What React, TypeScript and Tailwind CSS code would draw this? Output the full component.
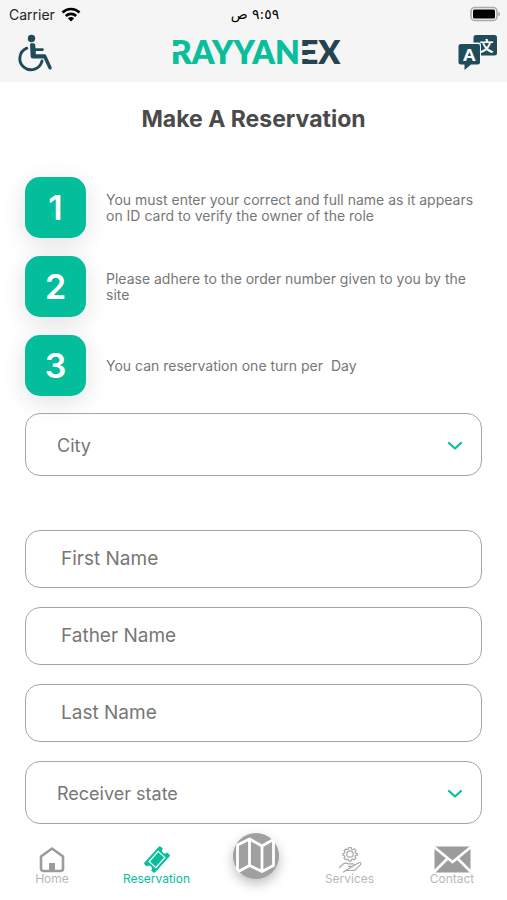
import * as React from "react"

const steps = [
  "You must enter your correct and full name as it appears on ID card to verify the owner of the role",
  "Please adhere to the order number given to you by the site",
  "You can reservation one turn per \u00a0Day",
]

function StatusBar() {
  return (
    <div className="grid h-7 grid-cols-3 items-center pr-1.5 pl-[9px] text-[#222]">
      <div className="flex items-center gap-1.5">
        <span className="text-[14px]">Carrier</span>
        <svg viewBox="0 0 20 15" className="h-[15px] w-5" aria-label="Wi-Fi">
          <g fill="none" stroke="#000" strokeWidth="2.6">
            <path d="M1.5 5.5C6.2.9 13.8.9 18.5 5.5" />
            <path d="M4.8 9C7.7 6.2 12.3 6.2 15.2 9" />
          </g>
          <path d="M10 14.5 6.8 11.2C8.6 9.6 11.4 9.6 13.2 11.2Z" />
        </svg>
      </div>
      <span
        dir="rtl"
        className="text-center font-['DejaVu_Sans',sans-serif] text-[14px] text-black"
      >
        ٩:٥٩ ص
      </span>
      <svg
        viewBox="0 0 31 16"
        className="h-4 w-[31px] justify-self-end"
        aria-label="Battery full"
      >
        <rect x="1" y="1.5" width="26" height="13" rx="4" fill="#f5f5f5" stroke="#aaa" strokeWidth="1.6" />
        <rect x="3" y="3.5" width="22" height="9" rx="1.5" />
        <path d="M28.5 5.5C30.5 6.5 30.5 9.5 28.5 10.5Z" fill="#999" />
      </svg>
    </div>
  )
}

function WheelchairIcon() {
  return (
    <svg viewBox="0 0 36 38" className="h-[38px] w-9" aria-hidden>
      <circle cx="14.5" cy="4.5" r="3.7" fill="#1f4c58" />
      <path
        d="M13 10.2C13 8.8 18 8.8 18.2 10.6L18.5 14.3H25.5C27.3 14.3 27.3 17 25.500 17H18.7L18.9 20.3H27.2C28.3 20.3 28.9 20.7 29.3 21.6L34.6 33.2C35.4 35.3 32.4 36.5 31.5 34.6L26.8 24.5H15.8C14.5 24.5 13.8 23.6 13.7 22.5Z"
        fill="#1f4c58"
      />
      <path
        d="M9.8 14.2A11.2 11.2 0 1 0 25 27"
        fill="none"
        stroke="#1f4c58"
        strokeWidth="2.9"
        strokeLinecap="round"
      />
    </svg>
  )
}

function TranslateIcon() {
  return (
    <svg viewBox="0 0 40 38" className="h-[38px] w-10" aria-hidden>
      <path
        d="M18 1H36.5Q39 1 39 3.5V19Q39 21.5 36.5 21.5H23V11Q23 8.5 20.5 8.5H15.5V3.5Q15.5 1 18 1Z"
        fill="#1f4c58"
      />
      <path
        d="M3 10H20Q22 10 22 12V28Q22 30.5 19.500 30.5H13L6.5 36V30.5H3Q.5 30.5 .5 28V12.5Q.5 10 3 10Z"
        fill="#1f4c58"
      />
      <text x="11.2" y="26.5" textAnchor="middle" fontSize="17" fontWeight="800" fill="#fff" fontFamily="Lato, sans-serif">
        A
      </text>
      <text x="28.5" y="17" textAnchor="middle" fontSize="14" fontWeight="700" fill="#fff" fontFamily="'Noto Sans CJK SC', sans-serif">
        文
      </text>
    </svg>
  )
}

function Logo() {
  return (
    <a
      href="#home"
      className="relative font-['Lato',sans-serif] text-[32px] leading-9 font-extrabold whitespace-nowrap text-[#08be9b]"
    >
      RAYYAN
      <span className="relative inline-block text-[#26434f]">
        EX
        {/* splits the stem into three bars */}
        <span className="absolute top-3 left-0 h-1 w-2 bg-[#f5f5f5]" />
        <span className="absolute top-[21px] left-0 h-1 w-2 bg-[#f5f5f5]" />
      </span>
      {/* break in the stem of the first letter */}
      <span className="absolute top-3 left-0 h-1.5 w-2 bg-[#f5f5f5]" />
    </a>
  )
}

const fieldBorder = "w-full rounded-[15px] border border-[#a5a5a5] bg-transparent"

function SelectField({ label }: { label: string }) {
  return (
    <div className="relative">
      <select
        aria-label={label}
        className={`${fieldBorder} h-[63px] appearance-none px-[31px] pt-0.5 text-[18px] text-[#777]`}
      >
        <option>{label}</option>
      </select>
      <svg
        viewBox="0 0 16 10"
        className="pointer-events-none absolute top-7 right-[19px] h-2.5 w-4"
        aria-hidden
      >
        <path
          d="M2 2 8 7.500 14 2"
          fill="none"
          stroke="#08be9b"
          strokeWidth="2.2"
          strokeLinecap="round"
          strokeLinejoin="round"
        />
      </svg>
    </div>
  )
}

function TextField({ label }: { label: string }) {
  return (
    <input
      type="text"
      aria-label={label}
      placeholder={label}
      className={`${fieldBorder} h-[58px] px-[35px] pb-0.5 text-[19px] text-[#555] placeholder:text-[#777]`}
    />
  )
}

function HomeIcon() {
  return (
    <svg viewBox="0 0 28 27" className="h-[27px] w-7" aria-hidden>
      <path
        d="M3 10.5 14 2.5 25 10.5V22.5Q25 25 22.5 25H5.5Q3 25 3 22.5Z"
        fill="none"
        stroke="#9c9c9c"
        strokeWidth="2.6"
        strokeLinejoin="round"
      />
      <path d="M11 17H17V25H11Z" fill="#9c9c9c" />
    </svg>
  )
}

function TicketIcon() {
  return (
    <svg viewBox="0 0 28 28" className="h-[27px] w-7" aria-hidden>
      <g transform="rotate(-48 14 14)">
        <path
          d="M3 6.500H25Q26.5 6.5 26.5 8V11A3 3 0 0 0 26.5 17V20Q26.5 21.5 25 21.5H3Q1.5 21.5 1.5 20V17A3 3 0 0 0 1.5 11V8Q1.5 6.5 3 6.5Z"
          fill="#08be9b"
        />
        <rect x="7" y="9.3" width="14" height="9.4" fill="none" stroke="#fff" strokeWidth="1.3" />
      </g>
    </svg>
  )
}

function MapIcon() {
  return (
    <svg
      viewBox="0 0 48 48"
      className="size-12 rounded-full drop-shadow-[0_5px_6px_rgba(0,0,0,0.25)]"
      aria-hidden
    >
      <circle cx="24" cy="24" r="23" fill="#a0a0a0" />
      <path
        d="M5.5 13 17.5 7 30 14 41.5 7.5V33.5L30 39.5 17.5 33.5 5.5 40ZM17.5 7V33.5M30 14V39.5"
        fill="none"
        stroke="#fff"
        strokeWidth="2.8"
        strokeLinejoin="round"
      />
    </svg>
  )
}

function ServicesIcon() {
  return (
    <svg
      viewBox="0 0 24 27"
      className="h-[27px] w-6"
      fill="none"
      stroke="#a8a8a8"
      strokeWidth="1.2"
      strokeLinejoin="round"
      strokeLinecap="round"
      aria-hidden
    >
      <circle cx="12" cy="8" r="3.2" />
      <path d="M10.8 1.5H13.2L13.6 3.2 14.9 3.7 16.4 2.8 18 4.4 17.1 5.9 17.6 7.1 19.2 7.5V9.2L17.6 9.6 17 10.9 17.9 12.3 16.3 13.9 14.9 13 13.5 13.6 13.1 15.2H10.9L10.4 13.6 9.1 13 7.7 13.9 6 12.3 6.9 10.9 6.4 9.6 4.8 9.2V7.5L6.4 7.1 7 5.9 6.1 4.4 7.7 2.8 9.1 3.7 10.4 3.2Z" />
      <path d="M1.5 21.5 5.5 17.8C7 16.8 8.5 17 10 17.8H14.5C16.5 17.8 16.3 20.3 14.5 20.3H10.5M16.2 19.3 21 16.7C22.8 16 23.5 17.6 22.3 18.8L17.3 23.8Q16.5 24.5 15.3 24.5H8L5.5 26Z" />
    </svg>
  )
}

function MailIcon() {
  return (
    <svg viewBox="0 0 37 27" className="h-[27px] w-[37px]" aria-hidden>
      <rect x=".5" y=".5" width="36" height="26" fill="#9c9c9c" />
      <path
        d="M0 1 18.5 16 37 1M0 26 13.5 12.5M37 26 23.5 12.5"
        fill="none"
        stroke="#fff"
        strokeWidth="2.7"
      />
    </svg>
  )
}

function NavItem({
  label,
  icon,
  active = false,
}: {
  label: string
  icon: React.ReactNode
  active?: boolean
}) {
  return (
    <a
      href={`#${label.toLowerCase()}`}
      aria-current={active ? "page" : undefined}
      className={`flex flex-col items-center pt-[22px] text-xs leading-3 ${active ? "text-[#08be9b]" : "text-[#b8b8b8]"}`}
    >
      {icon}
      {label}
    </a>
  )
}

export default function App() {
  return (
    <div className="flex min-h-screen flex-col bg-white font-['Inter',sans-serif]">
      <header className="bg-[#f5f5f5]">
        <StatusBar />
        <div className="flex h-[54px] items-start justify-between pt-1.5 pr-[9px] pl-[17px]">
          <button type="button" aria-label="Accessibility">
            <WheelchairIcon />
          </button>
          <Logo />
          <button type="button" aria-label="Change language">
            <TranslateIcon />
          </button>
        </div>
      </header>

      <main className="px-[25px] pt-[21px]">
        <h1 className="text-center text-[23px] leading-8 font-bold text-[#4a4a4a]">
          Make A Reservation
        </h1>

        <ol className="mt-[42px] flex flex-col gap-[18px]">
          {steps.map((text, i) => (
            <li key={text} className="flex items-center gap-5">
              <span className="flex size-[61px] shrink-0 items-center justify-center rounded-[15px] bg-[#03bd9b] text-[34px] font-semibold text-white shadow-[0_6px_24px_rgba(0,0,0,0.12)]">
                {i + 1}
              </span>
              <p className="text-[14px] leading-4 text-[#777]">{text}</p>
            </li>
          ))}
        </ol>

        <form className="mt-[17px]">
          <SelectField label="City" />
          <div className="mt-[54px] flex flex-col gap-[19px]">
            <TextField label="First Name" />
            <TextField label="Father Name" />
            <TextField label="Last Name" />
            <SelectField label="Receiver state" />
          </div>
        </form>
      </main>

      <nav className="grid grid-cols-[104fr_105fr_93fr_95fr_110fr]">
        <NavItem label="Home" icon={<HomeIcon />} />
        <NavItem label="Reservation" icon={<TicketIcon />} active />
        <a href="#map" aria-label="Map" className="flex justify-center pt-2">
          <MapIcon />
        </a>
        <NavItem label="Services" icon={<ServicesIcon />} />
        <NavItem label="Contact" icon={<MailIcon />} />
      </nav>
    </div>
  )
}
